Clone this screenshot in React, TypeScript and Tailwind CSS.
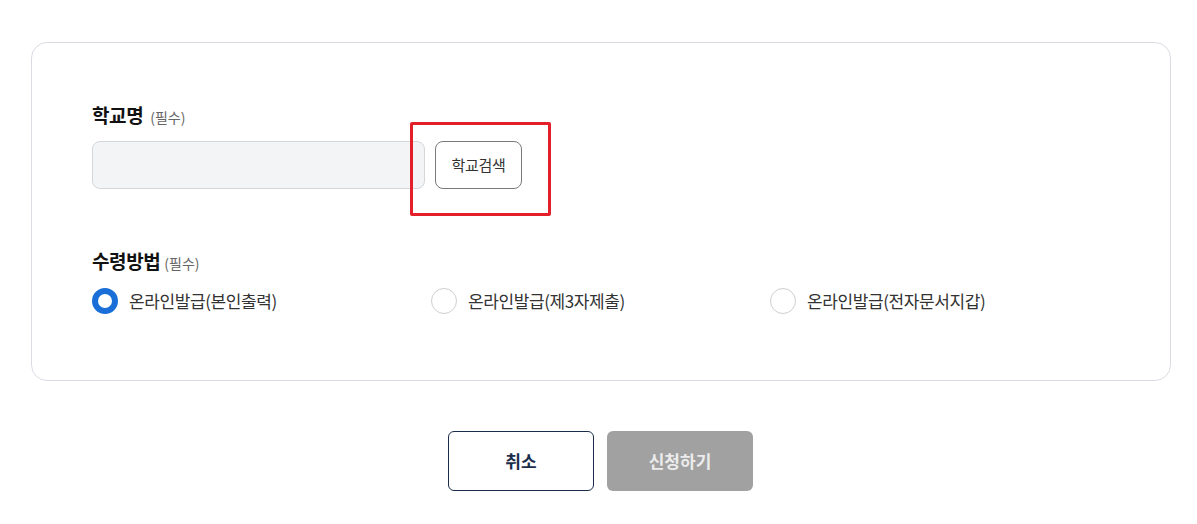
import React from 'react';

const options = [
  { label: '온라인발급(본인출력)', checked: true },
  { label: '온라인발급(제3자제출)', checked: false },
  { label: '온라인발급(전자문서지갑)', checked: false },
];

function Radio({ checked }: { checked: boolean }) {
  return checked ? (
    <span className="w-[26px] h-[26px] rounded-full border-[6px] border-[#1a6ed8] bg-white shrink-0" />
  ) : (
    <span className="w-[26px] h-[26px] rounded-full border border-[#cfcfcf] bg-white shrink-0" />
  );
}

export default function App() {
  return (
    <div
      className="w-[1197px] h-[524px] bg-white pt-[42px] px-[31px]"
      style={{ fontFamily: '"Noto Sans CJK KR", "Noto Sans", sans-serif' }}
    >
      <div className="w-[1140px] h-[339px] border border-[#d9dde3] rounded-[16px] pl-[60px] pt-[58px]">
        <div className="flex items-baseline gap-[7px] h-[28px]">
          <span className="text-[19px] font-bold text-[#111] tracking-[-0.4px]">학교명</span>
          <span className="text-[14px] text-[#666]">(필수)</span>
        </div>
        <div className="flex items-center mt-[12px]">
          <div className="w-[333px] h-[48px] rounded-[8px] border border-[#d4d6da] bg-[#f3f4f6]" />
          <div className="relative ml-[10px]">
            <button className="w-[87px] h-[48px] rounded-[8px] border border-[#7a7a7a] bg-white text-[15px] text-[#333] tracking-[-0.3px]">
              학교검색
            </button>
            <div className="absolute left-[-25px] top-[-19px] w-[141px] h-[94px] border-[3px] border-[#e3202a] rounded-[2px]" />
          </div>
        </div>
        <div className="flex items-baseline gap-[4px] mt-[58px] h-[28px]">
          <span className="text-[19px] font-bold text-[#111] tracking-[-0.4px]">수령방법</span>
          <span className="text-[14px] text-[#666]">(필수)</span>
        </div>
        <div className="flex mt-[13px]">
          {options.map((o) => (
            <label key={o.label} className="w-[339px] flex items-center gap-[11px]">
              <Radio checked={o.checked} />
              <span className="text-[17px] text-[#333] tracking-[-0.4px]">{o.label}</span>
            </label>
          ))}
        </div>
      </div>
      <div className="flex justify-center gap-[13px] mt-[50px] pl-[4px]">
        <button className="w-[146px] h-[60px] rounded-[6px] border border-[#1b2d4b] bg-white text-[17px] font-bold text-[#1b2d4b]">
          취소
        </button>
        <button className="w-[146px] h-[60px] rounded-[6px] bg-[#a1a1a1] text-[17px] font-bold text-[#ececec]">
          신청하기
        </button>
      </div>
    </div>
  );
}
